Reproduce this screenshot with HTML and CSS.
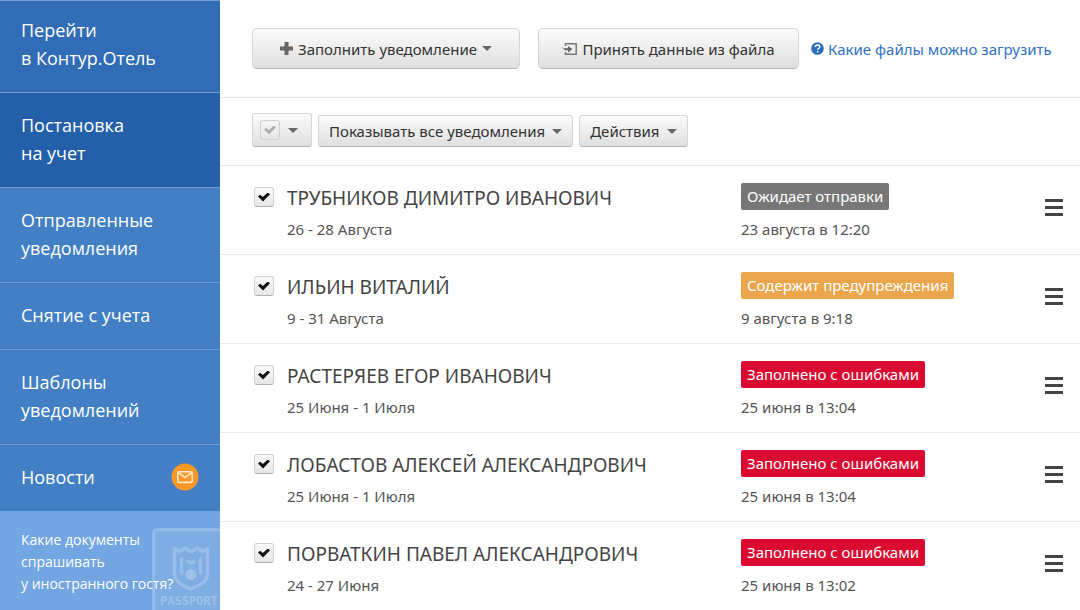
FILE: index.html
```html
<!DOCTYPE html>
<html lang="ru">
<head>
<meta charset="utf-8">
<meta name="viewport" content="width=device-width, initial-scale=1">
<title>Постановка на учет</title>
<link rel="stylesheet" href="styles.css">
</head>
<body>
<div class="app">
  <aside class="sidebar">
    <nav class="nav">
      <a class="nav-item nav-top" href="#">Перейти<br>в Контур.Отель</a>
      <a class="nav-item nav-active" href="#" aria-current="page">Постановка<br>на учет</a>
      <a class="nav-item" href="#">Отправленные<br>уведомления</a>
      <a class="nav-item" href="#">Снятие с учета</a>
      <a class="nav-item" href="#">Шаблоны<br>уведомлений</a>
      <a class="nav-item nav-news" href="#">Новости
        <svg class="mail" viewBox="0 0 28 28" aria-hidden="true"><circle cx="14" cy="14" r="13.5" fill="#fd9827"/><rect x="6.8" y="8.8" width="14.4" height="10.6" rx="1" fill="none" stroke="#ffe9c8" stroke-width="1.6"/><path d="M7.5 9.8l6.5 4.7 6.500-4.700" fill="none" stroke="#ffe9c8" stroke-width="1.600"/></svg>
      </a>
    </nav>
    <a class="promo" href="#">
      <svg class="passport" viewBox="0 0 68 82" aria-hidden="true">
        <rect x="1.500" y="1.500" width="90" height="100" rx="4" fill="#fff" fill-opacity=".09" stroke="#fff" stroke-opacity=".2" stroke-width="3"/>
        <g fill="none" stroke="#fff" stroke-opacity=".2" stroke-width="3.500" stroke-linejoin="round" stroke-linecap="round">
          <path d="M22.500 20.500l5 3 5.500-3.500 6 4 6-4 5.500 3.500 5-3v25c0 8-7 12-16.500 15.500-9.500-3.500-16.500-7.500-16.500-15.500z"/>
          <path d="M29.500 31v14M48.500 31v14M36 33.500l3 1.500 3-1.500"/>
        </g>
        <circle cx="39" cy="46.500" r="5.500" fill="#fff" fill-opacity=".25"/>
        <text class="passport-text" x="8" y="77">PASSPORT</text>
      </svg>
      <span class="promo-text">Какие документы<br>спрашивать<br>у иностранного гостя?</span>
    </a>
  </aside>

  <main class="main">
    <header class="header">
      <button class="btn btn-large btn-create" type="button">
        <svg class="ic-plus" viewBox="0 0 13 13" aria-hidden="true"><path d="M4.500 0h4v4.500h4.500v4h-4.500v4.500h-4v-4.500h-4.500v-4h4.500z" fill="#666"/></svg>
        <span>Заполнить уведомление</span><i class="caret"></i>
      </button>
      <button class="btn btn-large btn-import" type="button">
        <svg class="ic-import" viewBox="0 0 15 12" aria-hidden="true"><path d="M3.500 3V.8h10.700v10.400H3.500V9" fill="none" stroke="#777" stroke-width="1.500"/><path d="M0 4.300l2 1h4V3l4.500 3L6 9.500V7.200H3z" fill="#666"/></svg>
        <span>Принять данные из файла</span>
      </button>
      <a class="help" href="#">
        <svg class="ic-help" viewBox="0 0 13 13" aria-hidden="true"><circle cx="6.500" cy="6.500" r="6.300" fill="#2d6dbd"/><path d="M4.300 5.100c0-1.500 1-2.200 2.200-2.200s2.300.7 2.300 1.900c0 1.400-2.100 1.500-2.100 3M6.700 8.900v1.500" fill="none" stroke="#fff" stroke-width="1.500"/></svg>
        <span>Какие файлы можно загрузить</span>
      </a>
    </header>

    <div class="toolbar">
      <button class="btn btn-select" type="button" aria-label="Выделить"><span class="ghost-check"></span><i class="caret"></i></button>
      <button class="btn" type="button"><span>Показывать все уведомления</span><i class="caret"></i></button>
      <button class="btn" type="button"><span>Действия</span><i class="caret"></i></button>
    </div>

    <ul class="list">
      <li class="row">
        <input class="check" type="checkbox" id="g1" checked>
        <div class="guest"><label class="name" for="g1">ТРУБНИКОВ ДИМИТРО ИВАНОВИЧ</label><span class="dates">26 - 28 Августа</span></div>
        <div class="state"><span class="badge badge-wait">Ожидает отправки</span><span class="dates">23 августа в 12:20</span></div>
        <button class="menu" type="button" aria-label="Меню"><i></i><i></i><i></i></button>
      </li>
      <li class="row">
        <input class="check" type="checkbox" id="g2" checked>
        <div class="guest"><label class="name" for="g2">ИЛЬИН ВИТАЛИЙ</label><span class="dates">9 - 31 Августа</span></div>
        <div class="state"><span class="badge badge-warn">Содержит предупреждения</span><span class="dates">9 августа в 9:18</span></div>
        <button class="menu" type="button" aria-label="Меню"><i></i><i></i><i></i></button>
      </li>
      <li class="row">
        <input class="check" type="checkbox" id="g3" checked>
        <div class="guest"><label class="name" for="g3">РАСТЕРЯЕВ ЕГОР ИВАНОВИЧ</label><span class="dates">25 Июня - 1 Июля</span></div>
        <div class="state"><span class="badge badge-error">Заполнено с ошибками</span><span class="dates">25 июня в 13:04</span></div>
        <button class="menu" type="button" aria-label="Меню"><i></i><i></i><i></i></button>
      </li>
      <li class="row">
        <input class="check" type="checkbox" id="g4" checked>
        <div class="guest"><label class="name" for="g4">ЛОБАСТОВ АЛЕКСЕЙ АЛЕКСАНДРОВИЧ</label><span class="dates">25 Июня - 1 Июля</span></div>
        <div class="state"><span class="badge badge-error">Заполнено с ошибками</span><span class="dates">25 июня в 13:04</span></div>
        <button class="menu" type="button" aria-label="Меню"><i></i><i></i><i></i></button>
      </li>
      <li class="row">
        <input class="check" type="checkbox" id="g5" checked>
        <div class="guest"><label class="name" for="g5">ПОРВАТКИН ПАВЕЛ АЛЕКСАНДРОВИЧ</label><span class="dates">24 - 27 Июня</span></div>
        <div class="state"><span class="badge badge-error">Заполнено с ошибками</span><span class="dates">25 июня в 13:02</span></div>
        <button class="menu" type="button" aria-label="Меню"><i></i><i></i><i></i></button>
      </li>
    </ul>
  </main>
</div>
</body>
</html>
```
FILE: styles.css
```css
* { box-sizing: border-box; }

body {
  margin: 0;
  font-family: "Noto Sans", "Open Sans", sans-serif;
  font-size: 15px;
  line-height: 20px;
  color: #333;
  background: #fff;
}

a { text-decoration: none; }

.app {
  display: flex;
  height: 100vh;
  overflow: hidden;
}

/* Sidebar */
.sidebar {
  display: flex;
  flex-direction: column;
  flex: 0 0 220px;
  background: #437fc4;
  font-family: "Open Sans", "Noto Sans", sans-serif;
}

.nav-item {
  display: block;
  padding: 18px 21px 20px;
  border-top: 1px solid #6f9dd3;
  font-size: 18px;
  line-height: 28px;
  color: #fff;
}

.nav-top {
  padding-top: 15px;
  background: #316db7;
}

.nav-active { background: #2460a9; }

.nav-news {
  display: flex;
  align-items: center;
  justify-content: space-between;
}

.mail {
  width: 28px;
  height: 28px;
}

.promo {
  position: relative;
  flex: 1;
  padding: 18px 21px;
  overflow: hidden;
  background: #72a5e1;
  font-size: 14px;
  line-height: 22px;
  color: #fff;
}

.promo-text { position: relative; }

.passport {
  position: absolute;
  top: 17px;
  right: 0;
  width: 68px;
  height: 82px;
}

.passport-text {
  font: bold 12px "DejaVu Sans Mono", monospace;
  fill: #fff;
  fill-opacity: .25;
}

/* Main column */
.main { flex: 1; min-width: 0; }

.header {
  display: flex;
  align-items: center;
  height: 98px;
  padding: 0 24px 0 32px;
  border-bottom: 1px solid #e6e6e6;
}

.btn {
  display: flex;
  flex: none;
  align-items: center;
  justify-content: center;
  gap: 7px;
  height: 32px;
  padding: 0 10px;
  border: 1px solid #d5d5d5;
  border-bottom-color: #b5b5b5;
  border-radius: 3px;
  background: linear-gradient(#fcfcfc, #dfdfdf);
  font: inherit;
  color: #333;
  white-space: nowrap;
}

.btn-large {
  gap: 5px;
  height: 41px;
  border-radius: 5px;
}

.btn-create { width: 268px; }
.btn-import { width: 261px; margin-left: 18px; }

.caret {
  border: 5px solid transparent;
  border-top-color: #666;
  border-bottom: 0;
}

.ic-plus { width: 13px; height: 13px; }
.ic-import { width: 15px; height: 12px; }
.ic-help { width: 13px; height: 13px; }

.help {
  display: flex;
  align-items: center;
  gap: 4px;
  margin-left: 12px;
  color: #3072c4;
  white-space: nowrap;
}

.toolbar {
  display: flex;
  align-items: flex-end;
  gap: 6px;
  height: 68px;
  padding: 0 32px 18px;
  border-bottom: 1px solid #e6e6e6;
}

.btn-select {
  justify-content: flex-start;
  gap: 8px;
  width: 60px;
  height: 34px;
  padding: 0 7px;
}

.ghost-check {
  display: flex;
  align-items: center;
  justify-content: center;
  width: 20px;
  height: 20px;
  border: 1px solid #d0d0d0;
  border-radius: 3px;
}

.ghost-check::before,
.check:checked::before {
  content: "";
  width: 12px;
  height: 9px;
  background: #b0b0b0;
  clip-path: polygon(0 45%, 18% 25%, 40% 50%, 82% 0, 100% 20%, 42% 100%);
}

/* Notification list */
.list {
  margin: 0;
  padding: 0;
  list-style: none;
}

.row {
  display: grid;
  grid-template-columns: 20px minmax(0, 1fr) 304px 18px;
  column-gap: 13px;
  align-items: start;
  padding: 17px 17px 15px 34px;
  border-bottom: 1px solid #e9e9e9;
}

.check {
  appearance: none;
  display: flex;
  align-items: center;
  justify-content: center;
  width: 20px;
  height: 20px;
  margin: 4px 0 0;
  border: 1px solid #d0d0d0;
  border-bottom-color: #b0b0b0;
  border-radius: 3px;
  background: linear-gradient(#fafafa, #e6e6e6);
}

.check:checked::before { background: #111; }

.guest,
.state {
  display: flex;
  flex-direction: column;
  align-items: flex-start;
  white-space: nowrap;
}

.guest { gap: 6px; }

.state {
  gap: 9px;
  padding-left: 13px;
}

.name {
  font-size: 19px;
  line-height: 30px;
  color: #444;
}

.dates { color: #555; }

.badge {
  padding: 0 6px;
  border-radius: 2px;
  line-height: 27px;
  color: #fff;
}

.badge-wait { background: #777; }
.badge-warn { background: #eba64d; }
.badge-error { background: #db0a30; }

.menu {
  display: flex;
  flex-direction: column;
  gap: 4px;
  margin-top: 16px;
  padding: 0;
  border: 0;
  background: none;
}

.menu i {
  width: 18px;
  height: 3px;
  background: #444;
}
```
